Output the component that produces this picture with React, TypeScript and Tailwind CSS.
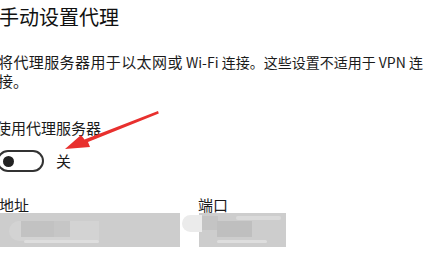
const font = { fontFamily: '"Noto Sans CJK SC", "Noto Sans", sans-serif' }

function ArrowMark() {
  // hand-drawn red annotation arrow pointing at the toggle
  return (
    <svg className="absolute left-0 top-0" width="440" height="260" viewBox="0 0 440 260">
      <path d="M158 111 L158.8 113.4 L88 142 L90 147 L65 149 L81 135 L84.5 139.5 Z" fill="#e8302e" />
    </svg>
  )
}

export default function App() {
  return (
    <div className="relative w-[440px] h-[260px] overflow-hidden bg-white text-[#1b1b1b]" style={font}>
      <div className="flex flex-col whitespace-nowrap -ml-[1px]">
        <div className="pt-[3px] h-[52px] text-[20px] leading-[28px] text-[#111]">手动设置代理</div>
        <div className="h-[67px] leading-[18px] -ml-[1px]">
          <span className="text-[15px] tracking-[0.4px]">将代理服务器用于以太网或</span>
          <span className="text-[14px]"> Wi-Fi 连接。这些设置不适用于 VPN 连</span>
          <br />
          <span className="text-[15px]">接。</span>
        </div>
        <div className="text-[15px] leading-[18px] h-[31px] -ml-[3px]">使用代理服务器</div>
        <div className="flex items-center gap-[12px] h-[22px] -ml-[2px]">
          <div className="w-[47px] h-[22px] rounded-full border-2 border-[#333] flex items-center pl-[4px]">
            <div className="w-[11px] h-[11px] rounded-full bg-[#222]" />
          </div>
          <span className="text-[15px] leading-[20px]">关</span>
        </div>
        <div className="flex mt-[24px]">
          <div className="flex flex-col w-[200px]">
            <span className="text-[15px] leading-[18px] h-[18px]">地址</span>
            <div className="relative -mt-[1px] w-[181px] h-[34px] bg-[#cdcdcd]">
              <div className="absolute left-[10px] top-[8px] w-[90px] h-[20px] rounded-l-full bg-[#d3d3d3]" />
              <div className="absolute left-[22px] top-[8px] w-[33px] h-[16px] bg-[#c2c2c2]" />
              <div className="absolute left-[55px] top-[8px] w-[16px] h-[16px] bg-[#c6c6c6]" />
              <div className="absolute left-[25px] top-[27px] w-[75px] h-[3px] rounded-full bg-[#dedede]" />
            </div>
          </div>
          <div className="flex flex-col">
            <span className="text-[15px] leading-[18px] h-[18px] -ml-[1px]">端口</span>
            <div className="relative -mt-[1px] w-[87px] h-[34px] bg-[#cdcdcd]">
              <div className="absolute -left-[17px] top-[2px] w-[20px] h-[17px] rounded-l-full bg-[#ebebeb]" />
              <div className="absolute left-[3px] top-[3px] w-[16px] h-[14px] bg-[#c4c4c4]" />
              <div className="absolute left-[18px] top-[8px] w-[35px] h-[16px] bg-[#bfbfbf]" />
              <div className="absolute left-[37px] top-[3px] w-[45px] h-[4px] rounded-full bg-[#dadada]" />
              <div className="absolute left-[18px] top-[27px] w-[50px] h-[3px] rounded-full bg-[#dedede]" />
            </div>
          </div>
        </div>
      </div>
      <ArrowMark />
    </div>
  )
}
